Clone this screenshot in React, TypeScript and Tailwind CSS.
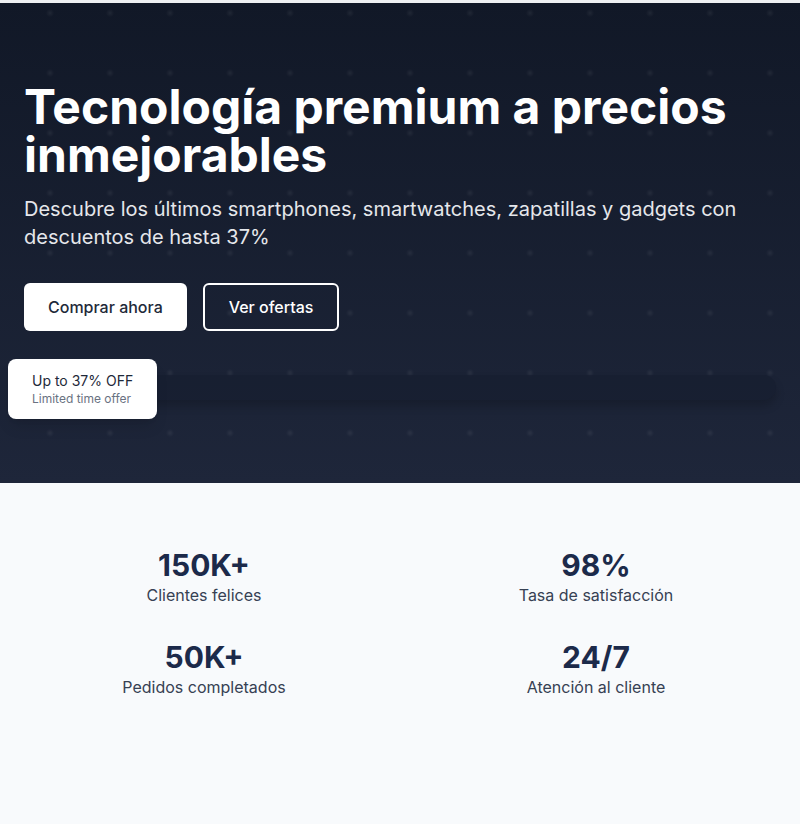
import React from 'react';

const stats = [
  { value: '150K+', label: 'Clientes felices' },
  { value: '98%', label: 'Tasa de satisfacción' },
  { value: '50K+', label: 'Pedidos completados' },
  { value: '24/7', label: 'Atención al cliente' },
];

export default function App() {
  return (
    <div className="min-h-screen bg-[#f8fafc] font-['Inter',sans-serif]">
      <div className="h-[3px] bg-[#eef0f3]" />

      <section className="relative overflow-hidden bg-linear-to-b from-[#111827] to-[#1e263a] px-6 pt-20 pb-[83px]">
        <div className="pointer-events-none absolute inset-0 bg-[radial-gradient(rgba(255,255,255,0.05)_1px,transparent_4px)] bg-[length:60px_60px] bg-[position:20px_40px]" />

        <div className="relative">
          <h1 className="text-5xl leading-none font-bold text-white">
            Tecnología premium a precios inmejorables
          </h1>
          <p className="mt-4 text-xl text-gray-200">
            Descubre los últimos smartphones, smartwatches, zapatillas y gadgets con descuentos de hasta 37%
          </p>

          <div className="mt-8 flex gap-4">
            <button className="rounded-md bg-white px-6 py-3 font-medium text-gray-800">Comprar ahora</button>
            <button className="rounded-md border-2 border-white px-6 py-[10px] font-medium text-white">Ver ofertas</button>
          </div>

          <div className="relative mt-11 h-[25px] rounded-2xl bg-[#161d2f]/60 shadow-[0_6px_10px_rgba(0,0,0,0.18)]">
            <div className="absolute -bottom-[19px] -left-4 rounded-lg bg-white px-6 py-3 shadow-lg">
              <p className="text-sm text-gray-800">Up to 37% OFF</p>
              <p className="text-xs text-gray-500">Limited time offer</p>
            </div>
          </div>
        </div>
      </section>

      <section className="px-6 py-16">
        <div className="grid grid-cols-2 gap-x-8 gap-y-8 text-center">
          {stats.map((s) => (
            <div key={s.label}>
              <div className="text-3xl font-bold text-[#1c2a4a]">{s.value}</div>
              <div className="text-gray-700">{s.label}</div>
            </div>
          ))}
        </div>
      </section>
    </div>
  );
}
